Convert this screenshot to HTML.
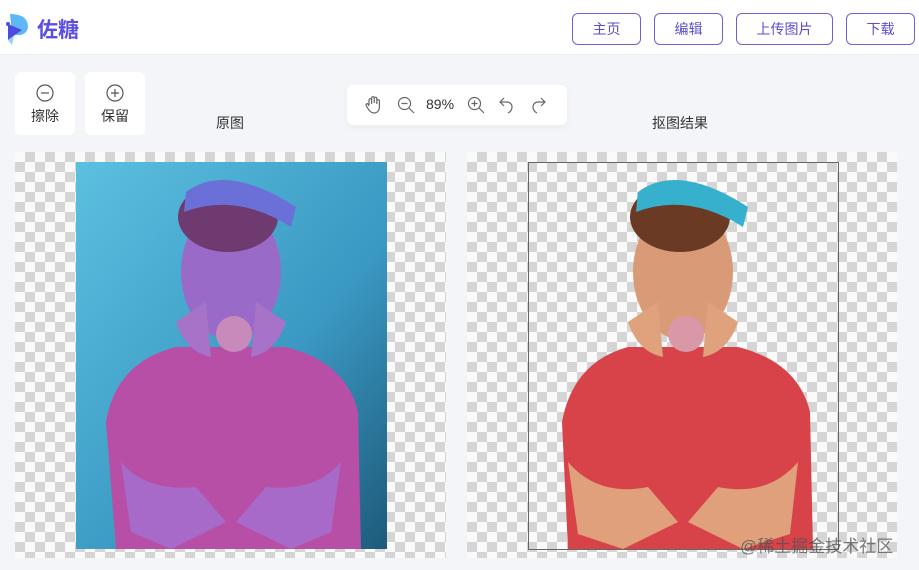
<!DOCTYPE html>
<html><head><meta charset="utf-8"><style>
*{margin:0;padding:0;box-sizing:border-box}
body{width:919px;height:570px;background:#f4f5f9;font-family:"Liberation Sans","Noto Sans CJK SC",sans-serif;position:relative;overflow:hidden;color:#333}
.hdr{position:absolute;left:0;top:0;width:919px;height:55px;background:#fff;border-bottom:1px solid #eceef3}
.logo{position:absolute;left:37px;top:14px;font-size:21px;font-weight:bold;color:#5b4ee0}
.btn{position:absolute;top:13px;height:32px;border:1px solid #6f62cc;border-radius:6px;color:#5b4fc8;font-size:14px;line-height:30px;text-align:center;background:#fff}
.tool{position:absolute;top:72px;width:60px;height:63px;background:#fff;border-radius:6px;text-align:center;font-size:14px;color:#333}
.tool svg{display:block;margin:12px auto 4px}
.zoom{position:absolute;left:347px;top:85px;width:220px;height:40px;background:#fff;border-radius:6px;box-shadow:0 3px 8px rgba(0,0,0,.04)}
.chk{position:absolute;top:152px;height:406px;background-color:#fafafb;background-image:linear-gradient(45deg,#d5d5d5 25%,transparent 25%,transparent 75%,#d5d5d5 75%),linear-gradient(45deg,#d5d5d5 25%,transparent 25%,transparent 75%,#d5d5d5 75%);background-size:20px 20px;background-position:0 0,10px 10px}
.lbl{position:absolute;top:113px;font-size:14px;color:#333}
</style></head><body>
<div class="hdr">
<svg style="position:absolute;left:4px;top:12px" width="26" height="34" viewBox="0 0 26 34"><path d="M6 2 Q24 2 24 15 Q22 26 8 22 Z" fill="#5fb8f5"/><path d="M4 12 L18 18 L4 28 Z" fill="#4a4ee0"/><path d="M4 28 L10 24 L8 33 Z" fill="#8fd3f7"/><circle cx="4" cy="12" r="2" fill="#4a4ee0"/></svg>
<div class="logo">佐糖</div>
<div class="btn" style="left:572px;width:69px">主页</div>
<div class="btn" style="left:654px;width:69px">编辑</div>
<div class="btn" style="left:736px;width:97px">上传图片</div>
<div class="btn" style="left:846px;width:69px">下载</div>
</div>
<div class="tool" style="left:15px"><svg width="18" height="18"><circle cx="9" cy="9" r="8" fill="none" stroke="#555" stroke-width="1.2"/><path d="M5 9h8" stroke="#555" stroke-width="1.2"/></svg>擦除</div>
<div class="tool" style="left:85px"><svg width="18" height="18"><circle cx="9" cy="9" r="8" fill="none" stroke="#555" stroke-width="1.2"/><path d="M5 9h8M9 5v8" stroke="#555" stroke-width="1.2"/></svg>保留</div>
<div class="zoom">
<svg style="position:absolute;left:18px;top:10px" width="18" height="20" viewBox="0 0 18 20" fill="none" stroke="#666" stroke-width="1.2"><path d="M4 10V5a1.3 1.3 0 0 1 2.6 0V9M6.6 8V3a1.3 1.3 0 0 1 2.6 0v5M9.2 8V3.5a1.3 1.3 0 0 1 2.6 0V9M11.8 9V6a1.3 1.3 0 0 1 2.6 0v6c0 4-2.5 6-5.5 6S4 16 2 12l-1-2a1.2 1.2 0 0 1 2-1l1 2"/></svg>
<svg style="position:absolute;left:50px;top:11px" width="18" height="18" fill="none" stroke="#666" stroke-width="1.2"><circle cx="7.5" cy="7.5" r="6"/><path d="M4.5 7.5h6M12 12l5 5"/></svg>
<div style="position:absolute;left:79px;top:11px;font-size:14px;color:#333">89%</div>
<svg style="position:absolute;left:120px;top:11px" width="18" height="18" fill="none" stroke="#666" stroke-width="1.2"><circle cx="7.5" cy="7.5" r="6"/><path d="M4.5 7.5h6M7.5 4.5v6M12 12l5 5"/></svg>
<svg style="position:absolute;left:151px;top:11px" width="18" height="18" fill="none" stroke="#666" stroke-width="1.2"><path d="M6 2L2 6l4 4M2 6h7a5 5 0 0 1 5 5c0 3-2 5-4 6"/></svg>
<svg style="position:absolute;left:182px;top:11px" width="18" height="18" fill="none" stroke="#666" stroke-width="1.2"><path d="M12 2l4 4-4 4M16 6H9a5 5 0 0 0-5 5c0 3 2 5 4 6"/></svg>
</div>
<div class="lbl" style="left:216px">原图</div>
<div class="lbl" style="left:652px">抠图结果</div>
<div class="chk" style="left:15px;width:431px"></div>
<div class="chk" style="left:467px;width:430px"></div>
<svg style="position:absolute;left:76px;top:162px" width="311" height="387" viewBox="0 0 311 387">
<defs><linearGradient id="bg" x1="0" y1="0" x2="1" y2="1"><stop offset="0" stop-color="#5cc0e0"/><stop offset="0.6" stop-color="#3a98c2"/><stop offset="1" stop-color="#1d5a7a"/></linearGradient></defs>
<rect width="311" height="387" fill="url(#bg)"/>
<g id="fig">
<path d="M40 387 L30 260 Q40 200 100 185 L210 185 Q270 200 282 250 L285 387 Z" fill="#b84fa6"/>
<path d="M45 300 Q70 330 120 325 L150 360 L95 387 L55 370 Z" fill="#a86ac8"/>
<path d="M265 300 Q240 330 190 325 L160 360 L215 387 L255 370 Z" fill="#a86ac8"/>
<ellipse cx="155" cy="110" rx="50" ry="68" fill="#9a6ac8"/>
<path d="M100 160 Q110 190 135 195 L130 140 Z M210 160 Q200 190 175 195 L180 140Z" fill="#a673c9"/>
<ellipse cx="152" cy="55" rx="50" ry="35" fill="#6e3a70"/>
<path d="M110 30 Q150 0 220 45 L215 65 Q160 30 108 50 Z" fill="#6b70d8"/>
<circle cx="158" cy="172" r="18" fill="#c88aba"/>
</g>
</svg>
<div style="position:absolute;left:528px;top:162px;width:311px;height:388px;border:1px solid #666"></div>
<svg style="position:absolute;left:528px;top:162px" width="311" height="387" viewBox="0 0 311 387">
<path d="M40 387 L34 260 Q45 200 100 185 L210 185 Q270 200 282 250 L285 387 Z" fill="#d8434a"/>
<path d="M40 300 Q70 335 120 325 L150 360 L95 387 L50 372 Z" fill="#e0a07c"/>
<path d="M270 300 Q240 335 190 325 L160 360 L215 387 L262 372 Z" fill="#e0a07c"/>
<ellipse cx="155" cy="110" rx="50" ry="68" fill="#d99a78"/>
<path d="M100 160 Q110 190 135 195 L130 140 Z M210 160 Q200 190 175 195 L180 140Z" fill="#dfa27c"/>
<ellipse cx="152" cy="55" rx="50" ry="35" fill="#6a3a24"/>
<path d="M110 30 Q150 0 220 45 L215 65 Q160 30 108 50 Z" fill="#36b0cc"/>
<circle cx="158" cy="172" r="18" fill="#d898a8"/>
</svg>
<div style="position:absolute;left:740px;top:532px;font-size:17px;color:rgba(80,80,80,.75)">@稀土掘金技术社区</div>
</body></html>
